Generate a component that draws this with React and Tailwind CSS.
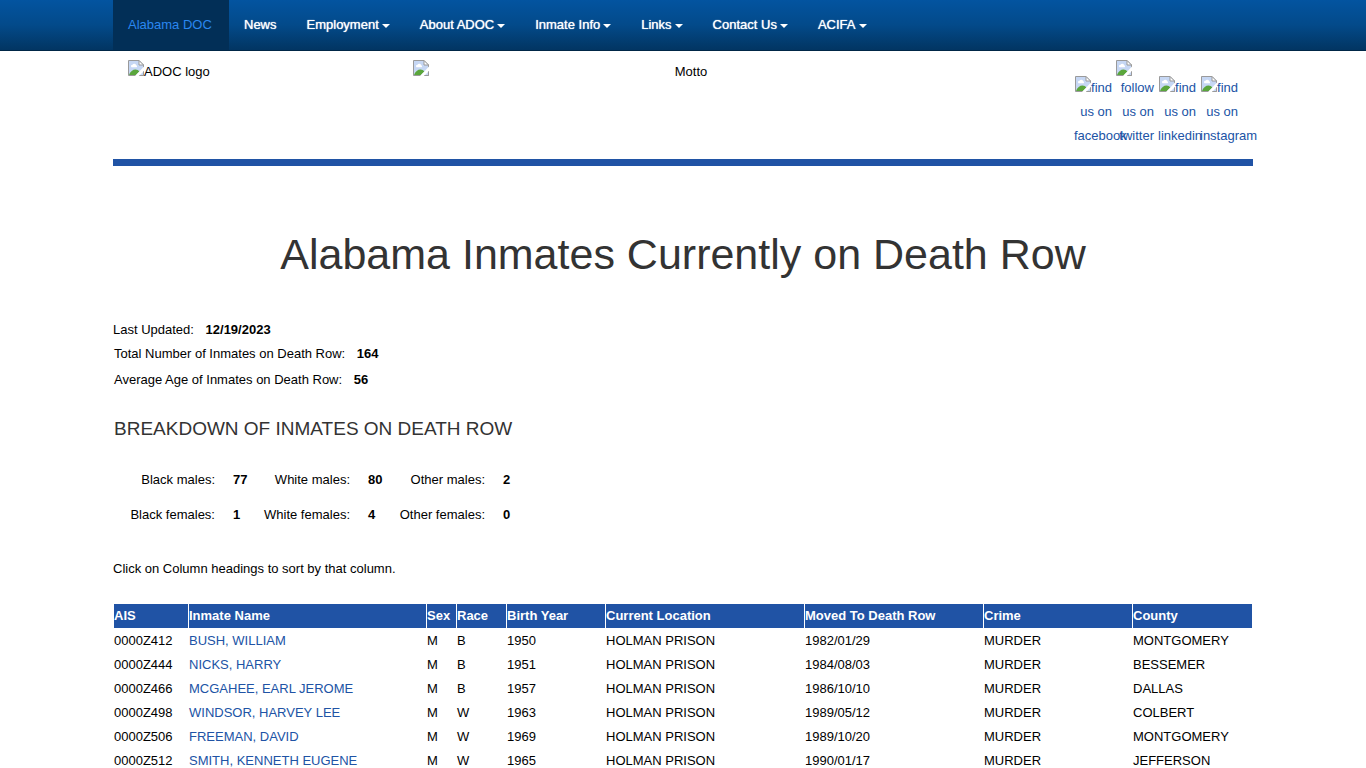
import React, { useState } from "react";

const navItems = [
  { label: "Alabama DOC", active: true },
  { label: "News" },
  { label: "Employment", menu: true },
  { label: "About ADOC", menu: true },
  { label: "Inmate Info", menu: true },
  { label: "Links", menu: true },
  { label: "Contact Us", menu: true },
  { label: "ACIFA", menu: true },
];

const columns = [
  { key: "ais", label: "AIS", width: "w-[75px]" },
  { key: "name", label: "Inmate Name", width: "w-[238px]" },
  { key: "sex", label: "Sex", width: "w-[30px]" },
  { key: "race", label: "Race", width: "w-[50px]" },
  { key: "birth", label: "Birth Year", width: "w-[99px]" },
  { key: "location", label: "Current Location", width: "w-[199px]" },
  { key: "moved", label: "Moved To Death Row", width: "w-[179px]" },
  { key: "crime", label: "Crime", width: "w-[149px]" },
  { key: "county", label: "County", width: "w-[121px]" },
];

const inmates = [
  { ais: "0000Z412", name: "BUSH, WILLIAM", sex: "M", race: "B", birth: "1950", location: "HOLMAN PRISON", moved: "1982/01/29", crime: "MURDER", county: "MONTGOMERY" },
  { ais: "0000Z444", name: "NICKS, HARRY", sex: "M", race: "B", birth: "1951", location: "HOLMAN PRISON", moved: "1984/08/03", crime: "MURDER", county: "BESSEMER" },
  { ais: "0000Z466", name: "MCGAHEE, EARL JEROME", sex: "M", race: "B", birth: "1957", location: "HOLMAN PRISON", moved: "1986/10/10", crime: "MURDER", county: "DALLAS" },
  { ais: "0000Z498", name: "WINDSOR, HARVEY LEE", sex: "M", race: "W", birth: "1963", location: "HOLMAN PRISON", moved: "1989/05/12", crime: "MURDER", county: "COLBERT" },
  { ais: "0000Z506", name: "FREEMAN, DAVID", sex: "M", race: "W", birth: "1969", location: "HOLMAN PRISON", moved: "1989/10/20", crime: "MURDER", county: "MONTGOMERY" },
  { ais: "0000Z512", name: "SMITH, KENNETH EUGENE", sex: "M", race: "W", birth: "1965", location: "HOLMAN PRISON", moved: "1990/01/17", crime: "MURDER", county: "JEFFERSON" },
];

const breakdown = [
  [["Black males:", "77"], ["White males:", "80"], ["Other males:", "2"]],
  [["Black females:", "1"], ["White females:", "4"], ["Other females:", "0"]],
];

function MissingImage({ className }) {
  return (
    <svg viewBox="0 0 16 16" className={`h-4 w-4 shrink-0 ${className || ""}`} aria-hidden="true">
      <path d="M0.5 0.5H11L15.5 5V15.5H0.5Z" fill="#c6d7f4" stroke="#9a9a9a" />
      <path d="M11 0.5V5H15.5Z" fill="#fff" stroke="#9a9a9a" />
      <path d="M3 6.5a1.5 1.5 0 0 1 1.5-1.8a2 2 0 0 1 3.7 0.6a1.1 1.1 0 0 1 0.3 2H3.5Z" fill="#fff" />
      <path d="M1 15C2 11.5 5 9.5 7.5 9.5C9 9.5 10.5 10.3 11.5 11.5L8 15Z" fill="#5aa63c" />
      <path d="M16 6.5L7 16H11L16 11Z" fill="#fff" />
      <path d="M11.5 15.5H15.5V11.5" fill="none" stroke="#9a9a9a" />
    </svg>
  );
}

function Caret() {
  return <span className="ml-[3px] mt-0.5 border-x-4 border-t-4 border-x-transparent border-t-white" />;
}

function Navbar() {
  return (
    <nav className="border-b border-[#002646] bg-linear-to-b from-[#0354a0] via-[#034a8a] to-[#023562]">
      <ul className="mx-auto flex h-[50px] max-w-[1140px]">
        {navItems.map((item) => (
          <li key={item.label} className="flex">
            <a
              href="#"
              className={`flex items-center px-[15px] ${
                item.active ? "min-w-[116px] bg-[#022f57] text-[#2a87f0]" : "text-white [text-shadow:0_0_1px_#ffffff]"
              }`}
            >
              {item.label}
              {item.menu && <Caret />}
            </a>
          </li>
        ))}
      </ul>
    </nav>
  );
}

function SocialLink({ lines, stacked }) {
  return (
    <a href="#" className="block w-[38px] text-right text-[#2053a5]">
      {stacked && <MissingImage className="block" />}
      <span className="flex justify-end">
        {!stacked && <MissingImage />}
        {lines[0]}
      </span>
      <span className="block">{lines[1]}</span>
      <span className="block whitespace-nowrap">{lines[2]}</span>
    </a>
  );
}

function Header() {
  return (
    <header className="flex h-[115px] border-b-[7px] border-[#2053a5] pt-[9px]">
      <div className="flex w-1/4 px-[15px]">
        <MissingImage />
        <span>ADOC logo</span>
      </div>
      <div className="flex w-1/2 px-[15px]">
        <MissingImage />
        <span className="flex-1 text-center">Motto</span>
      </div>
      <div className="flex w-1/4 items-start justify-end pr-[15px]">
        <div className="flex items-end gap-1">
          <SocialLink lines={["find", "us on", "facebook"]} />
          <SocialLink lines={["follow", "us on", "twitter"]} stacked />
          <SocialLink lines={["find", "us on", "linkedin"]} />
          <SocialLink lines={["find", "us on", "instagram"]} />
        </div>
      </div>
    </header>
  );
}

function Summary() {
  return (
    <section>
      <p>
        Last Updated: <b className="ml-2">12/19/2023</b>
      </p>
      <p className="pl-px">
        Total Number of Inmates on Death Row: <b className="ml-2">164</b>
      </p>
      <p className="mt-0.5 pl-px">
        Average Age of Inmates on Death Row: <b className="ml-2">56</b>
      </p>
      <h2 className="mt-[25px] pl-px text-[19px] leading-6 text-[#333]">
        BREAKDOWN OF INMATES ON DEATH ROW
      </h2>
      <table className="mt-[21px]">
        <tbody>
          {breakdown.map((row, i) => (
            <tr key={i} className="h-[35px]">
              {row.map(([label, value]) => (
                <React.Fragment key={label}>
                  <td className="w-[102px] p-0 text-right">{label}</td>
                  <td className="w-[33px] p-0 pl-[18px] font-bold">{value}</td>
                </React.Fragment>
              ))}
            </tr>
          ))}
        </tbody>
      </table>
    </section>
  );
}

function InmateTable() {
  const [sortKey, setSortKey] = useState("ais");
  const rows = [...inmates].sort((a, b) => a[sortKey].localeCompare(b[sortKey]));

  return (
    <table className="w-full table-fixed border-separate border-spacing-0 text-left">
      <thead>
        <tr>
          {columns.map((col) => (
            <th key={col.key} className={`${col.width} border-b border-l border-white bg-[#2053a5] p-0 last:border-r`}>
              <button type="button" className="block whitespace-nowrap font-bold text-white" onClick={() => setSortKey(col.key)}>
                {col.label}
              </button>
            </th>
          ))}
        </tr>
      </thead>
      <tbody>
        {rows.map((row) => (
          <tr key={row.ais}>
            {columns.map((col) => (
              <td key={col.key} className="border-l border-white p-0 whitespace-nowrap">
                {col.key === "name" ? (
                  <a href="#" className="text-[#2053a5]">{row.name}</a>
                ) : (
                  row[col.key]
                )}
              </td>
            ))}
          </tr>
        ))}
      </tbody>
    </table>
  );
}

export default function App() {
  return (
    <div className="h-screen overflow-hidden bg-white font-['Liberation_Sans',Arial,sans-serif] text-[13px] leading-6 text-black">
      <Navbar />
      <div className="mx-auto max-w-[1140px]">
        <Header />
        <main>
          <h1 className="mt-[58px] text-center text-[43px] leading-[60px] text-[#333]">
            Alabama Inmates Currently on Death Row
          </h1>
          <div className="mt-[34px]">
            <Summary />
          </div>
          <p className="mt-[25px] mb-[23px]">Click on Column headings to sort by that column.</p>
          <InmateTable />
        </main>
      </div>
    </div>
  );
}
